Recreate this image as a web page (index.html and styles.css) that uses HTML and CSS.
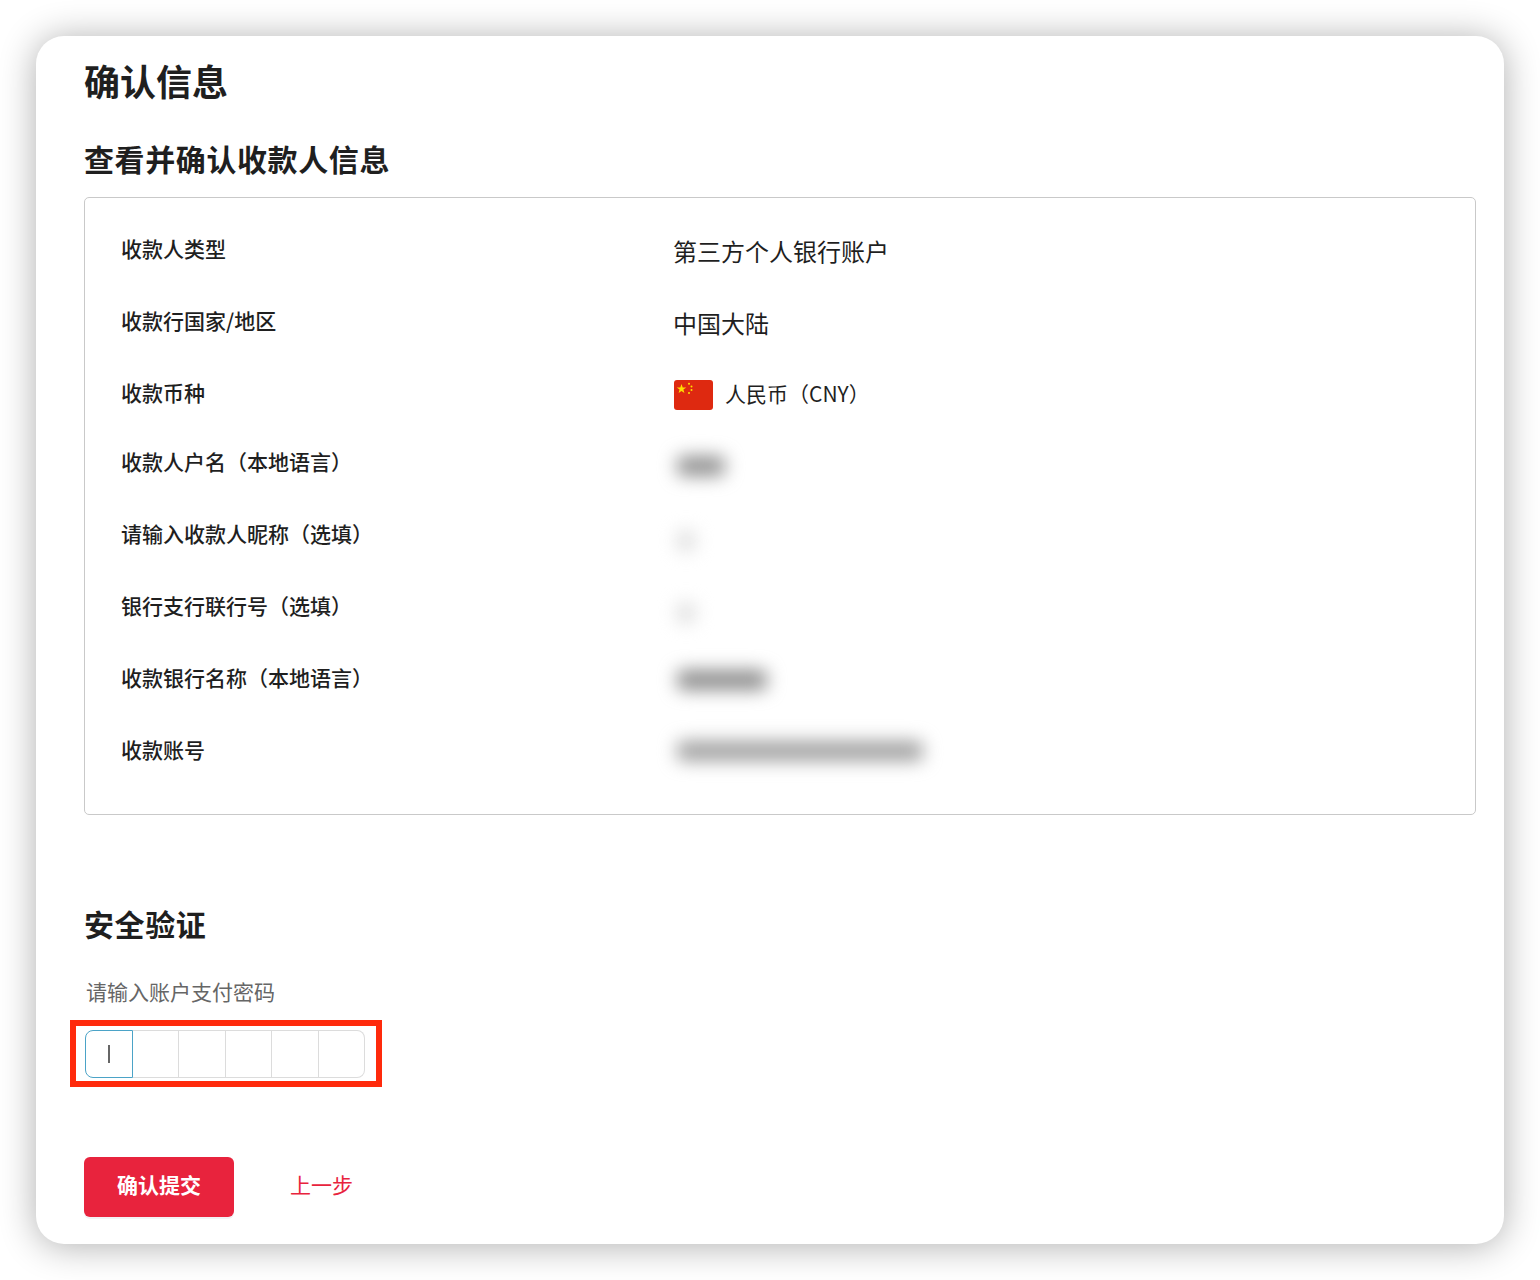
FILE: index.html
```html
<!DOCTYPE html>
<html lang="zh-CN">
<head>
<meta charset="utf-8">
<title>确认信息</title>
<link rel="stylesheet" href="styles.css">
</head>
<body>
<main class="card">
  <h1 class="title">确认信息</h1>
  <h2 class="section-title">查看并确认收款人信息</h2>
  <section class="details">
    <div class="row"><div class="label">收款人类型</div><div class="value text">第三方个人银行账户</div></div>
    <div class="row"><div class="label">收款行国家/地区</div><div class="value text">中国大陆</div></div>
    <div class="row row-currency"><div class="label">收款币种</div><div class="value currency">
      <svg class="flag" viewBox="0 0 39 30" aria-hidden="true">
        <rect width="39" height="30" rx="3" fill="#de2910"/>
        <polygon points="7.5,4 8.7,7.4 12.3,7.4 9.4,9.6 10.4,13 7.5,11 4.6,13 5.6,9.6 2.7,7.4 6.3,7.4" fill="#ffde00"/>
        <circle cx="15" cy="3.8" r="1" fill="#ffde00"/>
        <circle cx="17.5" cy="6.5" r="1" fill="#ffde00"/>
        <circle cx="17.5" cy="10" r="1" fill="#ffde00"/>
        <circle cx="15" cy="13" r="1" fill="#ffde00"/>
      </svg>
      <span class="currency-name">人民币（CNY）</span>
    </div></div>
    <div class="row"><div class="label">收款人户名（本地语言）</div><div class="value"><span class="blur blur-name"></span></div></div>
    <div class="row"><div class="label">请输入收款人昵称（选填）</div><div class="value"><span class="blur blur-dash"></span></div></div>
    <div class="row"><div class="label">银行支行联行号（选填）</div><div class="value"><span class="blur blur-dash"></span></div></div>
    <div class="row"><div class="label">收款银行名称（本地语言）</div><div class="value"><span class="blur blur-bank"></span></div></div>
    <div class="row"><div class="label">收款账号</div><div class="value"><span class="blur blur-account"></span></div></div>
  </section>
  <h2 class="section-title security">安全验证</h2>
  <p class="hint">请输入账户支付密码</p>
  <div class="pin">
    <div class="cell active"><span class="caret"></span></div>
    <div class="cell"></div>
    <div class="cell"></div>
    <div class="cell"></div>
    <div class="cell"></div>
    <div class="cell cell-last"></div>
    <div class="marker"></div>
  </div>
  <div class="actions">
    <button class="submit" type="button">确认提交</button>
    <a class="back">上一步</a>
  </div>
</main>
</body>
</html>
```
FILE: styles.css
```css
* { box-sizing: border-box; }
html, body { margin: 0; background: #fff; }
body {
  padding: 36px;
  height: 1280px;
  overflow: hidden;
  font-family: "Noto Sans CJK SC", "Liberation Sans", sans-serif;
  color: #1f1f1f;
}
.card {
  height: 1208px;
  padding: 0 28px 0 48px;
  background: #fff;
  border-radius: 28px;
  box-shadow: 0 2px 36px rgba(0, 0, 0, .32);
}
.title {
  margin: 0;
  padding-top: 19px;
  font-size: 36px;
  line-height: 50px;
  font-weight: 700;
}
.section-title {
  margin: 32px 0 0;
  font-size: 30px;
  line-height: 42px;
  font-weight: 700;
  letter-spacing: .6px;
}
.details {
  margin-top: 18px;
  height: 618px;
  padding: 17px 36px 0;
  border: 1px solid #c9c9c9;
  border-radius: 5px;
}
.row {
  display: grid;
  grid-template-columns: 552px 1fr;
  height: 72px;
  align-items: center;
}
.row-currency { height: 69px; }
.label {
  font-size: 21px;
  line-height: 30px;
  font-weight: 500;
  margin-top: -7px;
}
.row-currency .label { margin-top: -4px; }
.value {
  font-size: 24px;
  line-height: 34px;
}
.currency { display: flex; align-items: center; gap: 12px; margin-top: 2px; }
.flag { width: 39px; height: 30px; display: block; margin-left: 1px; }
.currency-name { font-size: 21px; line-height: 30px; margin-top: -4px; }
.blur {
  display: block;
  height: 20px;
  margin-left: 4px;
  background: #8c8c8c;
  border-radius: 6px;
  filter: blur(9px);
}
.blur-name { width: 48px; background: #909090; margin-top: 3px; }
.blur-dash { width: 18px; background: #dcdcdc; margin-top: 10px; }
.blur-bank { width: 90px; }
.blur-account { width: 246px; background: #a0a0a0; margin-top: -2px; }
.security { margin-top: 87px; }
.hint {
  margin: 32px 0 0 2px;
  font-size: 21px;
  line-height: 30px;
  color: #666;
}
.pin {
  position: relative;
  display: flex;
  width: 280px;
  height: 48px;
  margin: 24px 0 0 1px;
}
.cell {
  flex: 1;
  display: flex;
  align-items: center;
  justify-content: center;
  border: 1px solid #dcdcdc;
  border-left-width: 0;
  border-right-width: 1.5px;
}
.cell-last { border-radius: 0 8px 8px 0; border-right-width: 1px; }
.cell.active {
  border: 1px solid #4ba3c7;
  border-radius: 8px 0 0 8px;
}
.caret { width: 2px; height: 18px; background: #666; }
.marker {
  position: absolute;
  left: -15px;
  top: -10px;
  width: 312px;
  height: 67px;
  border: 6px solid #ff2a0c;
  pointer-events: none;
}
.actions {
  display: flex;
  align-items: center;
  gap: 56px;
  margin-top: 79px;
}
.submit {
  width: 150px;
  height: 60px;
  padding: 0 0 6px;
  border: 0;
  border-radius: 6px;
  background: #e8233d;
  box-shadow: 0 2px 0 #f2f2f5;
  color: #fff;
  font: 700 21px/30px "Noto Sans CJK SC", "Liberation Sans", sans-serif;
}
.back { font-size: 21px; line-height: 30px; color: #e8233d; margin-top: -6px; }
```
